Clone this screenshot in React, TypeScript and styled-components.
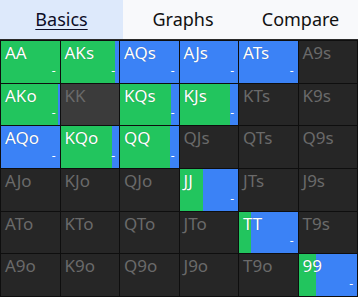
import React from "react";
import styled, { createGlobalStyle } from "styled-components";

const GlobalStyle = createGlobalStyle`
	html, body {
		margin: 0;
		padding: 0;
		background: #f8f9fb;
	}
	body {
		font-family: "Noto Sans", "Open Sans", sans-serif;
	}
`;

const Page = styled.div`
	width: 358px;
	height: 297px;
	display: flex;
	flex-direction: column;
	overflow: hidden;
`;

const TabBar = styled.div`
	display: flex;
	height: 40px;
	background: #f8f9fb;
	border-bottom: 1px solid #2b2b2b;
	box-sizing: border-box;
`;

const Tab = styled.div<{ $active?: boolean; $width: number }>`
	width: ${(p) => p.$width}px;
	display: flex;
	align-items: center;
	justify-content: center;
	padding-bottom: 2px;
	box-sizing: border-box;
	font-size: 18px;
	color: ${(p) => (p.$active ? "#0d0d26" : "#111")};
	text-decoration: ${(p) => (p.$active ? "underline" : "none")};
	text-underline-offset: 3px;
	text-decoration-thickness: 1px;
	background: ${(p) => (p.$active ? "#dde9fb" : "transparent")};
`;

const Grid = styled.div`
	flex: 1;
	display: grid;
	grid-template-columns: repeat(6, 1fr);
	grid-template-rows: repeat(6, 1fr);
	gap: 1px;
	padding: 1px;
	background: #0e0e0e;
`;

const GREEN = "#22c55e";
const BLUE = "#3b82f6";

const Cell = styled.div<{ $green?: number; $pair?: boolean; $on: boolean }>`
	display: flex;
	flex-direction: column;
	justify-content: space-between;
	padding: 0 4px 6px 4px;
	box-sizing: border-box;
	min-width: 0;
	background: ${(p) =>
		p.$on
			? `linear-gradient(to right, ${GREEN} ${p.$green}%, ${BLUE} ${p.$green}%)`
			: p.$pair
			? "#3b3b3b"
			: "#262626"};
`;

const Label = styled.span<{ $on: boolean }>`
	font-size: 17px;
	line-height: 23px;
	color: ${(p) => (p.$on ? "#ffffff" : "#6a6a6a")};
	text-shadow: ${(p) => (p.$on ? "0 0 1px rgba(0,0,0,0.35)" : "none")};
`;

const Dash = styled.span`
	align-self: flex-end;
	font-size: 12px;
	line-height: 12px;
	color: #ffffff;
`;

const ranks = ["A", "K", "Q", "J", "T", "9"];

// percent of each played hand that is green; the rest is blue
const mix: Record<string, number> = {
	AA: 100,
	AKs: 93,
	AQs: 0,
	AJs: 0,
	ATs: 0,
	AKo: 96,
	KQs: 86,
	KJs: 86,
	AQo: 0,
	KQo: 88,
	QQ: 85,
	JJ: 39,
	TT: 20,
	"99": 29,
};

const handName = (r: number, c: number) => {
	if (r === c) return ranks[r] + ranks[c];
	if (c > r) return ranks[r] + ranks[c] + "s";
	return ranks[c] + ranks[r] + "o";
};

const tabs = [
	{ name: "Basics", width: 123 },
	{ name: "Graphs", width: 120 },
	{ name: "Compare", width: 115 },
];

const App = () => {
	return (
		<Page>
			<GlobalStyle />
			<TabBar>
				{tabs.map((t, i) => (
					<Tab key={t.name} $width={t.width} $active={i === 0}>
						{t.name}
					</Tab>
				))}
			</TabBar>
			<Grid>
				{ranks.map((_, r) =>
					ranks.map((_, c) => {
						const name = handName(r, c);
						const on = name in mix;
						return (
							<Cell key={name} $on={on} $green={mix[name]} $pair={r === c}>
								<Label $on={on}>{name}</Label>
								{on && <Dash>-</Dash>}
							</Cell>
						);
					})
				)}
			</Grid>
		</Page>
	);
};

export default App;
